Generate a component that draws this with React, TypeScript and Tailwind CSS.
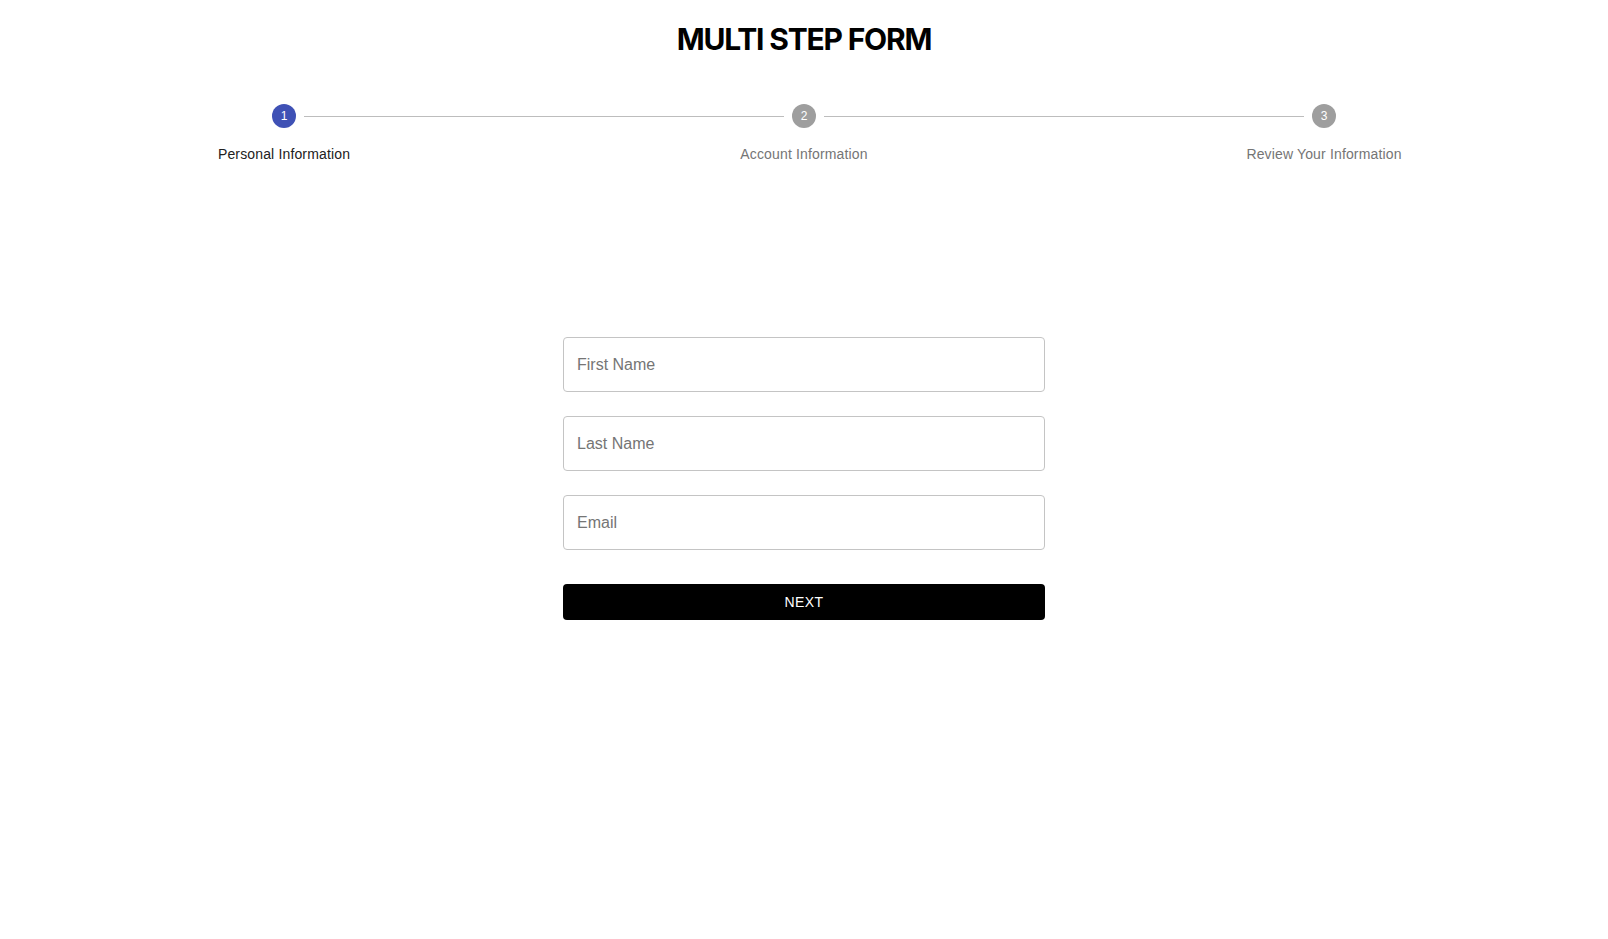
import React from "react";

const steps = [
  { n: 1, label: "Personal Information", active: true },
  { n: 2, label: "Account Information", active: false },
  { n: 3, label: "Review Your Information", active: false },
];

export default function App() {
  return (
    <div className="min-h-[939px] bg-white" style={{ fontFamily: '"Liberation Sans", Arial, sans-serif' }}>
      <h1
        className="pt-[21px] text-center text-[30px] leading-[36px] font-bold tracking-[-1.2px] text-black"
        style={{ fontFamily: 'Inter, "Liberation Sans", sans-serif' }}
      >
        MULTI STEP FORM
      </h1>

      <div className="mt-[47px] grid grid-cols-3 px-6">
        {steps.map((s, i) => (
          <div key={s.n} className="relative flex flex-col items-center">
            {i > 0 && (
              <div className="absolute top-[12px] left-[calc(-50%+20px)] right-[calc(50%+20px)] h-px bg-[#bdbdbd]" />
            )}
            <div
              className={`flex h-6 w-6 items-center justify-center rounded-full text-[12px] leading-none text-white ${
                s.active ? "bg-[#3f51b5]" : "bg-[#9e9e9e]"
              }`}
            >
              {s.n}
            </div>
            <div
              className={`mt-4 text-[14px] leading-[20px] tracking-[0.15px] ${
                s.active ? "text-[#212121]" : "text-[#757575]"
              }`}
            >
              {s.label}
            </div>
          </div>
        ))}
      </div>

      <form className="mx-auto mt-[173px] flex w-[482px] flex-col gap-6" onSubmit={(e) => e.preventDefault()}>
        {["First Name", "Last Name", "Email"].map((p) => (
          <input
            key={p}
            placeholder={p}
            className="h-[55px] w-full rounded-[4px] border border-[#c4c4c4] px-[13px] text-[16px] text-[#212121] outline-none placeholder:text-[#757575]"
          />
        ))}
        <button
          type="submit"
          className="mt-[10px] h-[36px] w-full rounded-[4px] bg-black text-[14px] tracking-[0.4px] text-white uppercase"
        >
          Next
        </button>
      </form>
    </div>
  );
}
